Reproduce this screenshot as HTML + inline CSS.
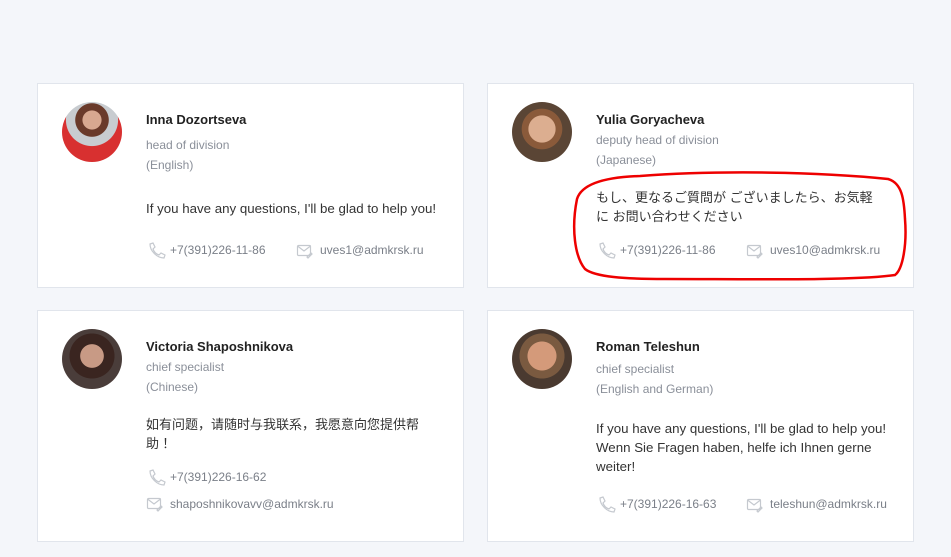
<!DOCTYPE html>
<html><head><meta charset="utf-8"><style>
body{margin:0;width:951px;height:557px;background:#f4f6fa;font-family:"Liberation Sans","Noto Sans CJK JP",sans-serif;position:relative;overflow:hidden}
.card{position:absolute;background:#fff;border:1px solid #e1e5ec;box-sizing:border-box}
.av{position:absolute;width:60px;height:60px;border-radius:50%}
.t{position:absolute;white-space:nowrap;line-height:19px}
.n{font-size:13px;font-weight:bold;color:#222}
.g{font-size:12px;color:#8a8f99}
.b{font-size:13.3px;color:#333}
.c{font-size:12px;color:#7a7f88}
</style></head><body>
<div class="card" style="left:37px;top:83px;width:427px;height:205px"></div>
<div class="card" style="left:487px;top:83px;width:427px;height:205px"></div>
<div class="card" style="left:37px;top:310px;width:427px;height:232px"></div>
<div class="card" style="left:487px;top:310px;width:427px;height:232px"></div>

<div class="av" style="left:62px;top:102px;background:radial-gradient(circle at 50% 30%,#d8a890 0 18%,#6a3a2a 19% 32%,#c8ccd0 33% 50%,#d83030 51%)"></div>
<div class="av" style="left:512px;top:102px;background:radial-gradient(circle at 50% 45%,#dcae90 0 30%,#8a5a3a 31% 45%,#5a4535 46%)"></div>
<div class="av" style="left:62px;top:329px;background:radial-gradient(circle at 50% 45%,#c89a85 0 26%,#3a2520 27% 50%,#4a3d3a 51%)"></div>
<div class="av" style="left:512px;top:329px;background:radial-gradient(circle at 50% 45%,#d49a7a 0 32%,#7a5a40 33% 50%,#4a3a30 51%)"></div>

<div class="t n" style="left:146px;top:110px">Inna Dozortseva</div>
<div class="t g" style="left:146px;top:136px">head of division</div>
<div class="t g" style="left:146px;top:156px">(English)</div>
<div class="t b" style="left:146px;top:199px">If you have any questions, I'll be glad to help you!</div>
<div class="t c" style="left:170px;top:241px">+7(391)226-11-86</div>
<div class="t c" style="left:320px;top:241px">uves1@admkrsk.ru</div>

<div class="t n" style="left:596px;top:110px">Yulia Goryacheva</div>
<div class="t g" style="left:596px;top:131px">deputy head of division</div>
<div class="t g" style="left:596px;top:151px">(Japanese)</div>
<div class="t b" style="left:596px;top:188px;font-size:13px">もし、更なるご質問が ございましたら、お気軽</div>
<div class="t b" style="left:596px;top:207px;font-size:13px">に お問い合わせください</div>
<div class="t c" style="left:620px;top:241px">+7(391)226-11-86</div>
<div class="t c" style="left:770px;top:241px">uves10@admkrsk.ru</div>

<div class="t n" style="left:146px;top:337px">Victoria Shaposhnikova</div>
<div class="t g" style="left:146px;top:358px">chief specialist</div>
<div class="t g" style="left:146px;top:378px">(Chinese)</div>
<div class="t b" style="left:146px;top:415px;font-size:13px">如有问题，请随时与我联系，我愿意向您提供帮</div>
<div class="t b" style="left:146px;top:434px;font-size:13px">助！</div>
<div class="t c" style="left:170px;top:468px">+7(391)226-16-62</div>
<div class="t c" style="left:170px;top:495px">shaposhnikovavv@admkrsk.ru</div>

<div class="t n" style="left:596px;top:337px">Roman Teleshun</div>
<div class="t g" style="left:596px;top:360px">chief specialist</div>
<div class="t g" style="left:596px;top:380px">(English and German)</div>
<div class="t b" style="left:596px;top:419px">If you have any questions, I'll be glad to help you!</div>
<div class="t b" style="left:596px;top:438px">Wenn Sie Fragen haben, helfe ich Ihnen gerne</div>
<div class="t b" style="left:596px;top:457px">weiter!</div>
<div class="t c" style="left:620px;top:495px">+7(391)226-16-63</div>
<div class="t c" style="left:770px;top:495px">teleshun@admkrsk.ru</div>

<svg width="951" height="557" style="position:absolute;left:0;top:0" fill="none" stroke="#c5c9cf" stroke-width="1.2">
<defs>
<g id="ph"><path d="M2 1l3-1 2 4-2 2c1 3 3 5 6 6l2-2 4 2-1 3c-7 0-14-7-14-14z"/></g>
<g id="em"><rect x="0.5" y="0.5" width="13" height="10" rx="1"/><path d="M0.5 1l6.5 5 6.5-5"/><path d="M10 12l4-4 1 1-4 4z"/></g>
</defs>
<use href="#ph" x="148" y="243"/><use href="#em" x="297" y="245"/>
<use href="#ph" x="598" y="243"/><use href="#em" x="747" y="245"/>
<use href="#ph" x="148" y="470"/><use href="#em" x="147" y="498"/>
<use href="#ph" x="598" y="497"/><use href="#em" x="747" y="499"/>
<path d="M640 176c80-6 180-4 248 3 14 4 16 20 17 40 2 25-2 50-10 56-40 6-150 4-230 4-40 0-70-2-80-10-10-12-14-40-8-70 5-16 30-22 63-23z" stroke="#e00" stroke-width="2.5"/>
</svg>
</body></html>
